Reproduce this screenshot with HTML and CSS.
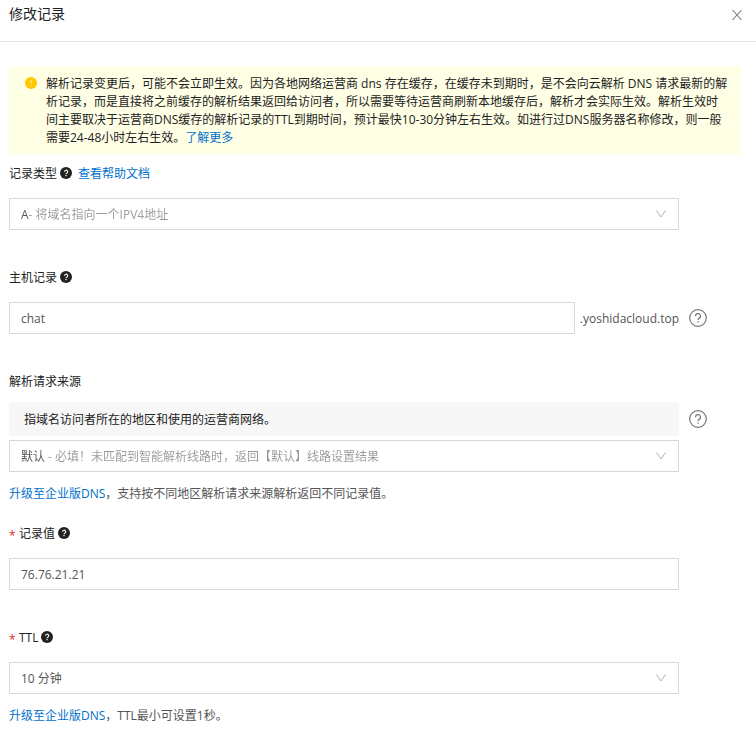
FILE: index.html
```html
<!DOCTYPE html>
<html lang="zh-CN">

	<head>
		<meta charset="UTF-8">
		<meta name="viewport" content="width=device-width, initial-scale=1">
		<title>修改记录</title>
		<link rel="stylesheet" href="styles.css">
	</head>

	<body>
		<!--图标-->
		<svg class="sprite" aria-hidden="true">
			<symbol id="icon_help" viewBox="0 0 12 12">
				<circle cx="6" cy="6" r="6" fill="#222" />
				<path d="M4.5 4.8a1.6 1.6 0 1 1 2.3 1.4c-.5.3-.8.5-.8 1" fill="none" stroke="#fff" stroke-width="1.1" />
				<rect x="5.4" y="8" width="1.2" height="1.2" fill="#fff" />
			</symbol>
			<symbol id="icon_help_line" viewBox="0 0 18 18">
				<circle cx="9" cy="9" r="8.3" fill="none" stroke="#777" stroke-width="1.2" />
				<path d="M6.5 7.2a2.5 2.5 0 1 1 3.6 2.2c-.8.4-1.1.8-1.1 1.6" fill="none" stroke="#777" stroke-width="1.2" />
				<rect x="8.4" y="12.3" width="1.3" height="1.4" fill="#777" />
			</symbol>
			<symbol id="icon_arrow" viewBox="0 0 10 8">
				<path d="M.5 .5L5 7L9.5 .5" fill="none" stroke="#b3b3b3" stroke-width="1" />
			</symbol>
		</svg>

		<div class="header">
			<h1 class="title">修改记录</h1>
			<button class="close" type="button" aria-label="关闭">
				<svg width="10" height="12" viewBox="0 0 10 12"><path d="M.5 1L9.5 11M9.5 1L.5 11" fill="none" stroke="#777" stroke-width="1.1" /></svg>
			</button>
		</div>

		<form class="content">
			<!--提示-->
			<div class="notice">
				<svg class="notice_icon" viewBox="0 0 12 12">
					<circle cx="6" cy="6" r="6" fill="#ffc800" />
					<path d="M6 3v3.8M6 8v1.2" stroke="#ffe98a" stroke-width="1.2" />
				</svg>
				<p class="notice_txt">解析记录变更后，可能不会立即生效。因为各地网络运营商 dns 存在缓存，在缓存未到期时，是不会向云解析 DNS 请求最新的解析记录，而是直接将之前缓存的解析结果返回给访问者，所以需要等待运营商刷新本地缓存后，解析才会实际生效。解析生效时间主要取决于运营商DNS缓存的解析记录的TTL到期时间，预计最快10-30分钟左右生效。如进行过DNS服务器名称修改，则一般需要24-48小时左右生效。<a href="#">了解更多</a></p>
			</div>

			<!--记录类型-->
			<div class="field">
				<div class="label_row">
					<label for="type">记录类型</label>
					<svg class="help"><use href="#icon_help" /></svg>
					<a class="doc" href="#">查看帮助文档</a>
				</div>
				<div class="select_box">
					<select id="type" class="control tone_type">
						<option>A- 将域名指向一个IPV4地址</option>
					</select>
					<svg class="arrow"><use href="#icon_arrow" /></svg>
				</div>
			</div>

			<!--主机记录-->
			<div class="field">
				<div class="label_row">
					<label for="host">主机记录</label>
					<svg class="help"><use href="#icon_help" /></svg>
				</div>
				<div class="line">
					<input id="host" class="control" type="text" value="chat">
					<span class="suffix">.yoshidacloud.top</span>
					<svg class="help_line"><use href="#icon_help_line" /></svg>
				</div>
			</div>

			<!--解析请求来源-->
			<div class="field field_hint">
				<div class="label_row label_near">
					<label for="line">解析请求来源</label>
				</div>
				<div class="line">
					<p class="desc">指域名访问者所在的地区和使用的运营商网络。</p>
					<svg class="help_line"><use href="#icon_help_line" /></svg>
				</div>
				<div class="select_box select_near">
					<select id="line" class="control tone_line">
						<option>默认 - 必填！未匹配到智能解析线路时，返回【默认】线路设置结果</option>
					</select>
					<svg class="arrow"><use href="#icon_arrow" /></svg>
				</div>
				<p class="hint"><a href="#">升级至企业版DNS</a>，支持按不同地区解析请求来源解析返回不同记录值。</p>
			</div>

			<!--记录值-->
			<div class="field">
				<div class="label_row">
					<span class="required">*</span>
					<label for="value">记录值</label>
					<svg class="help"><use href="#icon_help" /></svg>
				</div>
				<input id="value" class="control" type="text" value="76.76.21.21">
			</div>

			<!--TTL-->
			<div class="field field_hint">
				<div class="label_row">
					<span class="required">*</span>
					<label for="ttl">TTL</label>
					<svg class="help"><use href="#icon_help" /></svg>
				</div>
				<div class="select_box">
					<select id="ttl" class="control">
						<option>10 分钟</option>
					</select>
					<svg class="arrow"><use href="#icon_arrow" /></svg>
				</div>
				<p class="hint"><a href="#">升级至企业版DNS</a>，TTL最小可设置1秒。</p>
			</div>
		</form>
	</body>

</html>
```

FILE: styles.css
```css
* {
	box-sizing: border-box;
}

body {
	margin: 0;
	background-color: #fff;
	color: #222;
	font-family: "Open Sans", "Noto Sans CJK SC", sans-serif;
	font-size: 12px;
	line-height: 18px;
}

p,
h1 {
	margin: 0;
}

a {
	color: #0070cc;
	text-decoration: none;
}

a:hover {
	text-decoration: underline;
}

.sprite {
	display: none;
}

/*标题栏 */

.header {
	display: flex;
	justify-content: space-between;
	align-items: flex-start;
	height: 42px;
	padding: 5px 9px;
	border-bottom: 1px solid #e6e6e6;
}

.title {
	font-size: 14px;
	font-weight: normal;
	line-height: 18px;
}

.close {
	display: flex;
	align-items: center;
	justify-content: center;
	width: 20px;
	height: 20px;
	padding: 0;
	border: none;
	background: transparent;
	cursor: pointer;
}

.content {
	padding: 24px 15px 10px 9px;
}

/*提示 */

.notice {
	display: flex;
	gap: 9px;
	margin-bottom: 10px;
	padding: 9px 12px 7px 16px;
	background-color: #ffffe6;
}

.notice_icon {
	flex: none;
	width: 12px;
	height: 12px;
	margin-top: 2px;
}

/*表单 */

.field {
	margin-bottom: 38px;
	padding-right: 62px;
}

.field_hint {
	margin-bottom: 21px;
}

.label_row {
	display: flex;
	align-items: center;
	gap: 3px;
	height: 18px;
	margin-bottom: 16px;
}

.label_row label,
.doc,
.suffix {
	padding-top: 2px;
}

.label_near {
	margin-bottom: 12px;
}

.required {
	width: 7px;
	padding-top: 6px;
	color: #d93026;
}

.help {
	width: 12px;
	height: 12px;
}

.doc {
	margin-left: 3px;
}

.control {
	display: block;
	width: 100%;
	height: 32px;
	padding: 0 11px;
	border: 1px solid #d8d8d8;
	border-radius: 0;
	background-color: #fff;
	color: #555;
	font: inherit;
	appearance: none;
}

select.control {
	padding-top: 2px;
}

.control:focus {
	outline: none;
	border-color: #0070cc;
}

.select_box {
	position: relative;
}

.select_near {
	margin-top: 4px;
}

/*选项名深色，说明文字浅色 */

.tone_type,
.tone_line {
	background-color: transparent;
	background-clip: text;
	color: transparent;
}

.tone_type {
	background-image: linear-gradient(to right, #555 19px, #999 19px);
}

.tone_line {
	background-image: linear-gradient(to right, #555 36px, #999 36px);
}

.tone_type option,
.tone_line option {
	color: #555;
}

.arrow {
	position: absolute;
	top: 12px;
	right: 13px;
	width: 10px;
	height: 8px;
	pointer-events: none;
}

.line {
	display: flex;
	align-items: center;
	margin-right: -28px;
}

.suffix {
	margin-left: 5px;
	color: #555;
}

.help_line {
	flex: none;
	width: 18px;
	height: 18px;
	margin-left: 10px;
}

.desc {
	flex: 1;
	padding: 9px 15px 7px;
	background-color: #f7f7f7;
}

.hint {
	margin-top: 13px;
	color: #555;
}
```
